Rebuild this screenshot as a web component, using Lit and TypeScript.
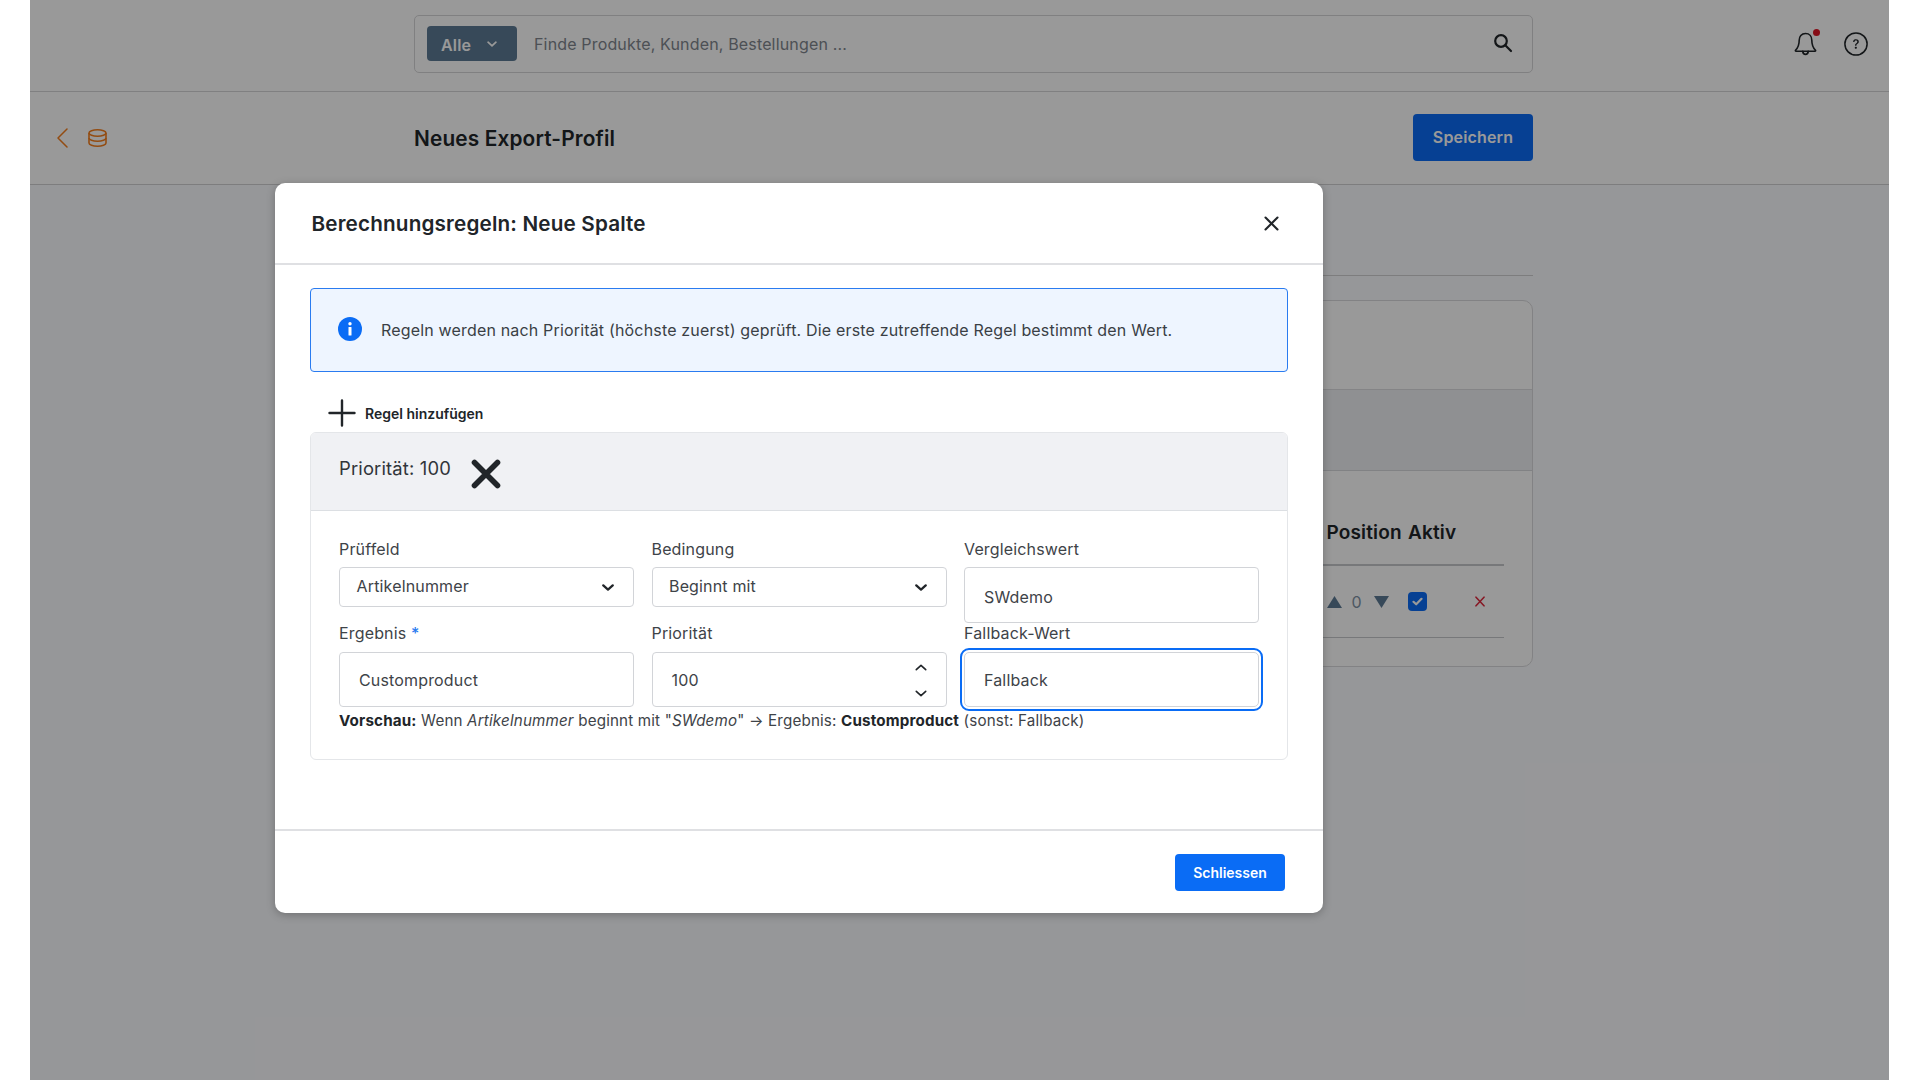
import { LitElement, html, css } from "lit";
import { customElement } from "lit/decorators.js";

const chevron = (cls: string, d: string, w = 2) => html`<svg class=${cls} viewBox="0 0 14 8" fill="none" stroke="currentColor" stroke-width=${w} stroke-linecap="round" stroke-linejoin="round"><path d=${d}></path></svg>`;
const DOWN = "M1.5 1.5L7 6.5L12.5 1.5";
const UP = "M1.5 6.5L7 1.5L12.5 6.5";

@customElement("app-root")
export class AppRoot extends LitElement {
  static styles = css`
    :host { display: block; width: 1920px; height: 1080px; background: #fff; font-family: Inter, "Noto Sans", sans-serif; color: #212529; font-size: 16px; letter-spacing: 0.16px; }
    * { box-sizing: border-box; }
    .page { position: relative; margin-left: 30px; width: 1859px; height: 1080px; background: #fbfcff; overflow: hidden; }
    .top { height: 92px; background: #fff; border-bottom: 1px solid #d5d5d8; display: flex; align-items: flex-start; padding: 15px 21px 0 384px; }
    .search { width: 1119px; height: 58px; border: 1px solid #d6d6d8; border-radius: 5px; display: flex; align-items: center; padding: 0 19px 0 12px; color: #80868e; }
    .alle { width: 90px; height: 35px; margin-top: -1px; background: #5d7a94; border-radius: 4px; color: #fff; display: flex; align-items: center; padding: 2px 0 0 14px; font-weight: 600; gap: 16px; }
    .alle svg { width: 10px; height: 6px; margin-top: -1px; }
    .ph { margin-left: 17px; flex: 1; }
    .search-ic { width: 20px; height: 20px; color: #212529; margin-top: -2px; }
    .top-ic { margin-left: auto; display: flex; gap: 27px; padding-top: 17px; align-items: flex-start; }
    .bell { position: relative; width: 23px; height: 24px; display: block; }
    .bell svg { width: 23px; height: 24px; display: block; }
    .dot { position: absolute; right: -3px; top: -3px; width: 7px; height: 7px; border-radius: 50%; background: #e01525; }
    .help { width: 24px; height: 24px; display: block; }
    .sub { height: 93px; background: #fff; border-bottom: 1px solid #d0d0d3; display: flex; align-items: center; padding: 0 356px 0 27px; }
    .nav { width: 357px; display: flex; align-items: center; gap: 20px; color: #f57f1e; }
    .nav svg { display: block; }
    .title { flex: 1; font-size: 20.8px; font-weight: 600; }
    .save { width: 120px; height: 47px; margin-top: -2px; background: #0a6cf5; border-radius: 4px; color: #fff; font-weight: 600; display: flex; align-items: center; justify-content: center; }
    .content { padding-left: 385px; width: 1503px; }
    .tabs { height: 91px; border-bottom: 1px solid #d0d1d3; }
    .panel { margin-top: 24px; height: 367px; border: 1px solid #d9d9dc; border-radius: 10px; background: #fff; overflow: hidden; display: flex; flex-direction: column; }
    .p-a { height: 88px; }
    .p-b { height: 82px; background: #eff0f3; border-top: 1px solid #dcdde0; border-bottom: 1px solid #d8d9dc; }
    .tbl { margin: 0 28px 0 0; }
    .thead { height: 95px; border-bottom: 2px solid #c6c8cc; display: flex; justify-content: flex-end; align-items: flex-end; padding-bottom: 20px; font-weight: 600; font-size: 19px; color: #212529; }
    .trow { height: 72px; border-bottom: 1px solid #c6c8cc; display: flex; justify-content: flex-end; align-items: center; }
    .c-pos { width: 81.5px; display: flex; align-items: center; gap: 10px; }
    .c-act { width: 96px; display: flex; align-items: center; justify-content: space-between; padding-right: 19px; }
    .num { color: #7f92a5; font-size: 16px; width: 11px; margin-right: 1px; }
    .tri { width: 15px; height: 12px; display: block; fill: #5d7a94; }
    .chk { width: 19px; height: 19px; background: #0a6cf5; border-radius: 4px; display: flex; align-items: center; justify-content: center; color: #fff; }
    .chk svg { width: 11px; height: 9px; display: block; }
    .del { width: 10px; height: 11px; display: block; color: #e02b3f; }

    .overlay { position: absolute; inset: 0; background: rgba(0, 0, 0, 0.4); padding: 183px 0 0 245px; }
    .modal { width: 1048px; height: 730px; background: #fff; border-radius: 10px; box-shadow: 0 2px 8px rgba(0, 0, 0, 0.25); display: flex; flex-direction: column; overflow: hidden; }
    .m-head { height: 82px; border-bottom: 2px solid #dfe0e3; display: flex; align-items: center; justify-content: space-between; padding: 0 44px 0 36.5px; flex: none; }
    .m-title { font-size: 20.7px; font-weight: 600; }
    .m-x { width: 15px; height: 15px; display: block; }
    .m-body { flex: 1; padding: 23px 35px 0 35px; display: flex; flex-direction: column; }
    .alert { height: 84px; border: 1px solid #2a7bf0; border-radius: 4px; background: #eef5ff; display: flex; align-items: center; padding-left: 27px; gap: 19px; font-size: 16px; letter-spacing: 0.17px; color: #3a3f45; flex: none; }
    .alert svg { width: 24px; height: 24px; display: block; margin-top: -2px; }
    .alert div { margin-top: -1px; }
    .add { margin-top: 27px; margin-left: 18px; height: 28px; display: flex; align-items: center; gap: 9px; font-size: 14px; font-weight: 600; flex: none; letter-spacing: 0; }
    .add svg { width: 28px; height: 28px; display: block; }
    .card { margin-top: 5px; height: 328px; border: 1px solid #e4e6e9; border-radius: 6px; overflow: hidden; flex: none; }
    .c-head { height: 78px; background: #f0f1f4; border-bottom: 1px solid #dcdfe3; display: flex; align-items: flex-start; padding: 24px 0 0 28px; gap: 20px; font-size: 18.4px; color: #30353a; }
    .c-head svg { width: 30px; height: 30px; margin-top: 2px; display: block; }
    .c-body { padding: 27px 28px 0 28px; }
    .grid { display: grid; grid-template-columns: 295px 295px 295px; column-gap: 17.5px; }
    .lab { height: 29px; line-height: 23px; color: #3e4348; font-size: 16px; }
    .lab2 { line-height: 21px; }
    .lab b { color: #2a7bf0; font-weight: 500; }
    .box { border: 1px solid #d2d4d8; border-radius: 4px; background: #fff; color: #3e4348; display: flex; align-items: center; }
    .sel { height: 40px; padding: 0 19px 0 16.5px; justify-content: space-between; margin-bottom: 16px; }
    .sel span { margin-top: -2px; }
    .sel svg { width: 12px; height: 7px; display: block; color: #212529; }
    .inp { height: 56px; padding: 4px 0 0 19px; }
    .inp-r { height: 55px; padding: 0 0 0 19px; margin-bottom: 0; }
    .focus { outline: 2.2px solid #0a6cf5; outline-offset: 2.2px; border-radius: 5px; }
    .spin { margin-left: auto; margin-right: 19px; display: flex; flex-direction: column; gap: 19px; margin-top: 2px; }
    .spin svg { width: 12px; height: 7px; display: block; color: #212529; }
    .preview { margin-top: 4px; font-size: 15.2px; line-height: 20px; color: #3e4348; }
    .preview b { color: #212529; font-weight: 700; }
    .m-foot { height: 84px; border-top: 2px solid #dfe0e3; display: flex; justify-content: flex-end; padding: 23px 38px 0 0; flex: none; }
    .close { width: 110px; height: 37px; background: #0a6cf5; border-radius: 4px; color: #fff; font-size: 14px; font-weight: 600; display: flex; align-items: center; justify-content: center; letter-spacing: 0; }
  `;

  render() {
    return html`
      <div class="page">
        <div class="top">
          <div class="search">
            <div class="alle">Alle ${chevron("", DOWN, 2.4)}</div>
            <div class="ph">Finde Produkte, Kunden, Bestellungen ...</div>
            <svg class="search-ic" viewBox="0 0 20 20" fill="none" stroke="currentColor" stroke-width="2.2" stroke-linecap="round"><circle cx="8" cy="8" r="5.8"></circle><path d="M12.3 12.3L18 18"></path></svg>
          </div>
          <div class="top-ic">
            <span class="bell">
              <svg viewBox="0 0 23 24" fill="none" stroke="#212529" stroke-width="1.6" stroke-linejoin="round" stroke-linecap="round"><path d="M11.5 1.5C7.4 1.5 5.2 4.6 5.2 8.2C5.2 13 3.9 15.8 1.5 18.3C1.2 18.7 1.4 19.2 2 19.2H21C21.6 19.2 21.8 18.7 21.5 18.3C19.1 15.8 17.8 13 17.8 8.2C17.8 4.6 15.6 1.5 11.5 1.5Z"></path><path d="M8.8 19.4C9 21.5 10.2 22.4 11.5 22.4C12.8 22.4 14 21.5 14.2 19.4" stroke-width="1.8"></path></svg>
              <span class="dot"></span>
            </span>
            <svg class="help" viewBox="0 0 16 16"><circle cx="8" cy="8" r="7.4" fill="none" stroke="#212529" stroke-width="1"></circle><path fill="#212529" transform="translate(2.4 2.4) scale(.7)" d="M5.255 5.786a.237.237 0 0 0 .241.247h.825c.138 0 .248-.113.266-.25.09-.656.54-1.134 1.342-1.134.686 0 1.314.343 1.314 1.168 0 .635-.374.927-.965 1.371-.673.489-1.206 1.06-1.168 1.987l.003.217a.25.25 0 0 0 .25.246h.811a.25.25 0 0 0 .25-.25v-.105c0-.718.273-.927 1.01-1.486.609-.463 1.244-.977 1.244-2.056 0-1.511-1.276-2.241-2.673-2.241-1.267 0-2.655.59-2.75 2.286zm1.557 5.763c0 .533.425.927 1.01.927.609 0 1.028-.394 1.028-.927 0-.552-.42-.94-1.029-.94-.584 0-1.009.388-1.009.94z"></path></svg>
          </div>
        </div>
        <div class="sub">
          <div class="nav">
            <svg width="11" height="20" viewBox="0 0 11 20" fill="none" stroke="currentColor" stroke-width="1.5" stroke-linecap="round" stroke-linejoin="round"><path d="M10 1L1 10L10 19"></path></svg>
            <svg width="19" height="18" viewBox="0 0 19 18" fill="none" stroke="currentColor" stroke-width="1.6"><ellipse cx="9.5" cy="4" rx="8.5" ry="3.2"></ellipse><path d="M1 4V14C1 15.8 4.8 17.2 9.5 17.2C14.2 17.2 18 15.8 18 14V4"></path><path d="M1 9C1 10.8 4.8 12.2 9.5 12.2C14.2 12.2 18 10.8 18 9"></path></svg>
          </div>
          <div class="title">Neues Export-Profil</div>
          <div class="save">Speichern</div>
        </div>
        <div class="content">
          <div class="tabs"></div>
          <div class="panel">
            <div class="p-a"></div>
            <div class="p-b"></div>
            <div class="tbl">
              <div class="thead"><div class="c-pos">Position</div><div class="c-act">Aktiv</div></div>
              <div class="trow">
                <div class="c-pos">
                  <svg class="tri" viewBox="0 0 15 12"><polygon points="7.5,0 15,12 0,12"></polygon></svg>
                  <span class="num">0</span>
                  <svg class="tri" viewBox="0 0 15 12"><polygon points="0,0 15,0 7.5,12"></polygon></svg>
                </div>
                <div class="c-act">
                  <span class="chk"><svg viewBox="0 0 11 9" fill="none" stroke="currentColor" stroke-width="2.2" stroke-linecap="round" stroke-linejoin="round"><path d="M1.5 4.8L4.2 7.3L9.5 1.8"></path></svg></span>
                  <svg class="del" viewBox="0 0 10 11" fill="none" stroke="currentColor" stroke-width="1.6" stroke-linecap="round"><path d="M1 1.2L9 9.8M9 1.2L1 9.8"></path></svg>
                </div>
              </div>
            </div>
          </div>
        </div>
        <div class="overlay">
          <div class="modal">
            <div class="m-head">
              <div class="m-title">Berechnungsregeln: Neue Spalte</div>
              <svg class="m-x" viewBox="0 0 15 15" fill="none" stroke="#212529" stroke-width="2.1" stroke-linecap="round"><path d="M1.5 1.5L13.5 13.5M13.5 1.5L1.5 13.5"></path></svg>
            </div>
            <div class="m-body">
              <div class="alert">
                <svg viewBox="0 0 24 24"><circle cx="12" cy="12" r="12" fill="#0a6cf5"></circle><circle cx="12" cy="6.8" r="1.7" fill="#fff"></circle><rect x="10.5" y="10" width="3" height="8.5" rx=".6" fill="#fff"></rect></svg>
                <div>Regeln werden nach Priorität (höchste zuerst) geprüft. Die erste zutreffende Regel bestimmt den Wert.</div>
              </div>
              <div class="add">
                <svg viewBox="0 0 28 28" fill="none" stroke="#212529" stroke-width="2.4" stroke-linecap="round"><path d="M14 1.5V26.5M1.5 14H26.5"></path></svg>
                <span>Regel hinzufügen</span>
              </div>
              <div class="card">
                <div class="c-head">
                  <span>Priorität: 100</span>
                  <svg viewBox="0 0 30 30" fill="none" stroke="#212529" stroke-width="5.6" stroke-linecap="round"><path d="M3.5 3.5L26.5 26.5M26.5 3.5L3.5 26.5"></path></svg>
                </div>
                <div class="c-body">
                  <div class="grid">
                    <div>
                      <div class="lab">Prüffeld</div>
                      <div class="box sel"><span>Artikelnummer</span>${chevron("", DOWN, 2.6)}</div>
                    </div>
                    <div>
                      <div class="lab">Bedingung</div>
                      <div class="box sel"><span>Beginnt mit</span>${chevron("", DOWN, 2.6)}</div>
                    </div>
                    <div>
                      <div class="lab">Vergleichswert</div>
                      <div class="box inp">SWdemo</div>
                    </div>
                    <div>
                      <div class="lab lab2">Ergebnis <b>*</b></div>
                      <div class="box inp-r">Customproduct</div>
                    </div>
                    <div>
                      <div class="lab lab2">Priorität</div>
                      <div class="box inp-r">100
                        <div class="spin">${chevron("", UP, 1.9)}${chevron("", DOWN, 1.9)}</div>
                      </div>
                    </div>
                    <div>
                      <div class="lab lab2">Fallback-Wert</div>
                      <div class="box inp-r focus">Fallback</div>
                    </div>
                  </div>
                  <div class="preview"><b>Vorschau:</b> Wenn <i>Artikelnummer</i> beginnt mit "<i>SWdemo</i>" → Ergebnis: <b>Customproduct</b> (sonst: Fallback)</div>
                </div>
              </div>
            </div>
            <div class="m-foot"><div class="close">Schliessen</div></div>
          </div>
        </div>
      </div>
    `;
  }
}
